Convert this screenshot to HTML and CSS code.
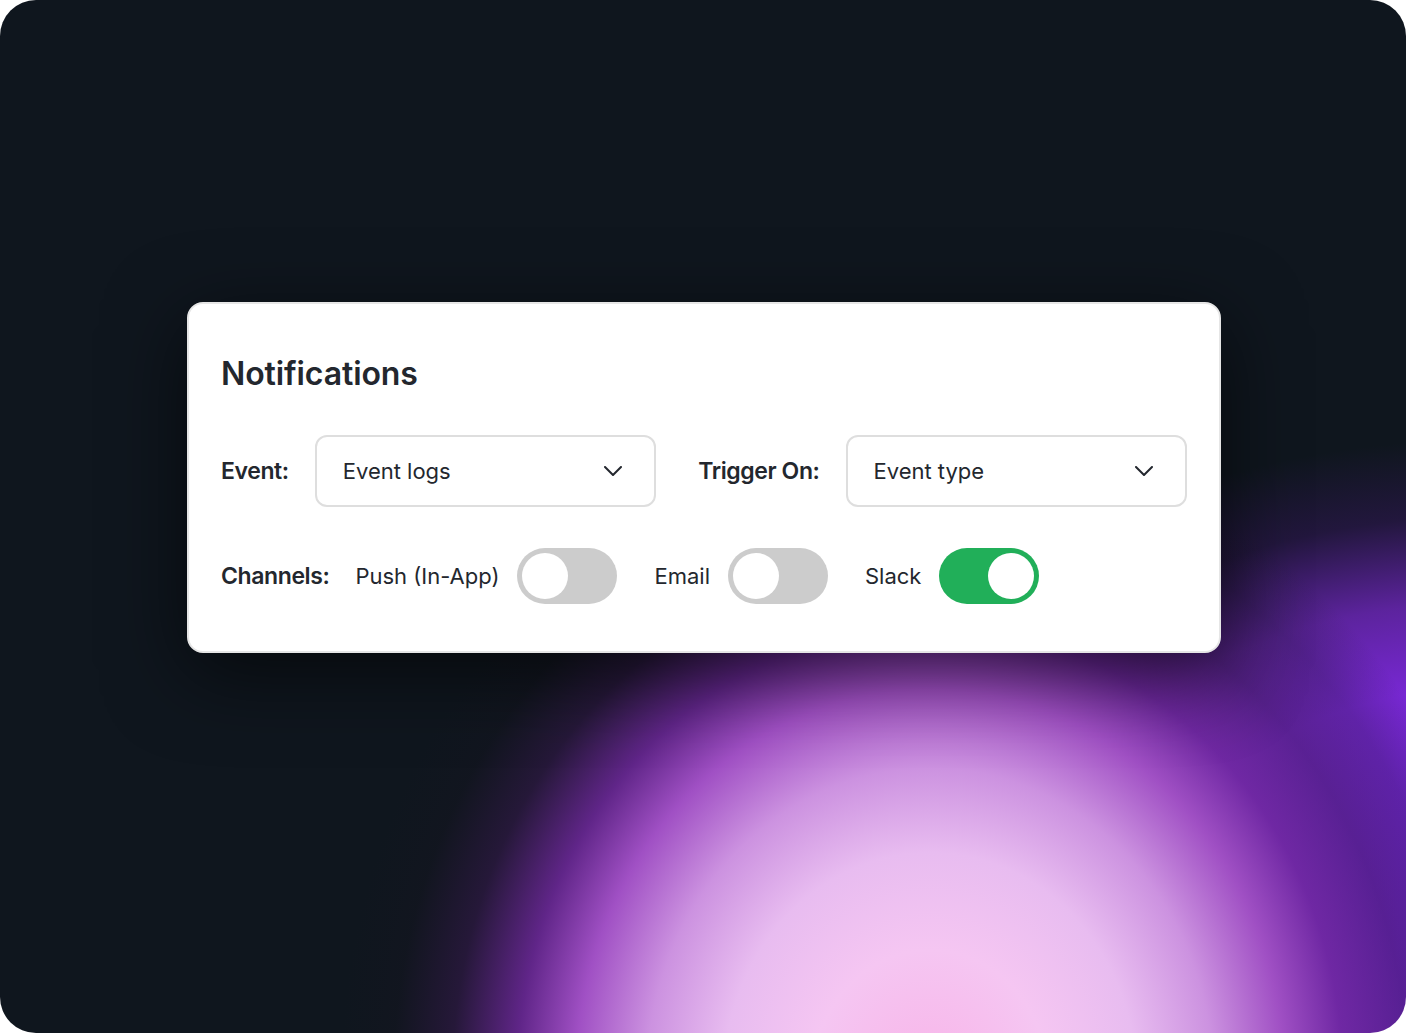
FILE: index.html
```html
<!DOCTYPE html>
<html lang="en">
<head>
    <meta charset="UTF-8">
    <meta name="viewport" content="width=device-width, initial-scale=1.0">
    <title>Notifications</title>
    <link rel="stylesheet" href="styles.css">
</head>
<body>

<div class="frame">
  <div class="card">
    <h2 class="title">Notifications</h2>

    <div class="row">
      <span class="label">Event:</span>
      <div class="select first">
        <span>Event logs</span>
        <svg class="chev" width="18" height="10" viewBox="0 0 18 10"><path d="M1 1 L9 9 L17 1" fill="none" stroke="#23272e" stroke-width="2" stroke-linecap="round" stroke-linejoin="round"/></svg>
      </div>
      <span class="label">Trigger On:</span>
      <div class="select">
        <span>Event type</span>
        <svg class="chev" width="18" height="10" viewBox="0 0 18 10"><path d="M1 1 L9 9 L17 1" fill="none" stroke="#23272e" stroke-width="2" stroke-linecap="round" stroke-linejoin="round"/></svg>
      </div>
    </div>

    <div class="row channels">
      <span class="label">Channels:</span>
      <div class="channel">
        <span>Push (In-App)</span>
        <div class="toggle"><span class="knob"></span></div>
      </div>
      <div class="channel">
        <span>Email</span>
        <div class="toggle"><span class="knob"></span></div>
      </div>
      <div class="channel">
        <span>Slack</span>
        <div class="toggle on"><span class="knob"></span></div>
      </div>
    </div>
  </div>
</div>

</body>
</html>
```

FILE: styles.css
```css
* {
  box-sizing: border-box;
}

body {
  margin: 0;
  background: #fff;
  font-family: Inter, "Noto Sans", sans-serif;
}

.frame {
  width: 1406px;
  height: 1033px;
  border-radius: 36px;
  overflow: hidden;
  padding: 302px 0 0 187px;
  display: flex;
  align-items: flex-start;
  background-color: #0f161e;
  background-image:
    radial-gradient(ellipse 590px 650px at 930px 1080px, #f8b4e8 0%, #f5c6f2 20%, #e8bcf0 35%, #cc92e0 48%, #a050c4 60%, rgba(110, 40, 155, 0.85) 70%, rgba(60, 26, 84, 0.5) 81%, rgba(25, 20, 35, 0.25) 91%, rgba(15, 22, 30, 0) 100%),
    radial-gradient(ellipse 680px 480px at 1480px 920px, #7024d4 0%, #7828d4 48%, rgba(118, 40, 200, 0.75) 66%, rgba(70, 24, 120, 0.35) 84%, rgba(15, 22, 30, 0) 100%);
}

.card {
  width: 1034px;
  background: #fff;
  border: 2px solid #e6e6e6;
  border-radius: 16px;
  padding: 50px 32px 47px 32px;
  box-shadow: 0 20px 80px rgba(0, 0, 0, 0.6);
  color: #23272e;
}

.title {
  margin: 0 0 41px;
  font-size: 32px;
  font-weight: 600;
  line-height: 40px;
  letter-spacing: -0.1px;
}

.row {
  display: flex;
  align-items: center;
  gap: 26px;
}

.label {
  font-size: 23px;
  font-weight: 600;
  letter-spacing: -0.4px;
}

.select {
  flex: 1 1 0;
  height: 72px;
  border: 2px solid #dedede;
  border-radius: 12px;
  padding: 0 32px 0 26px;
  display: flex;
  align-items: center;
  justify-content: space-between;
  font-size: 22px;
}

.select.first {
  margin-right: 16px;
}

.channels {
  margin-top: 41px;
}

.channel {
  display: flex;
  align-items: center;
  gap: 18px;
  font-size: 22px;
  margin-right: 11px;
}

.toggle {
  width: 100px;
  height: 56px;
  border-radius: 28px;
  background: #cccccc;
  padding: 5px;
  display: flex;
}

.knob {
  width: 46px;
  height: 46px;
  border-radius: 50%;
  background: #fff;
}

.toggle.on {
  background: #21af59;
  justify-content: flex-end;
}
```
